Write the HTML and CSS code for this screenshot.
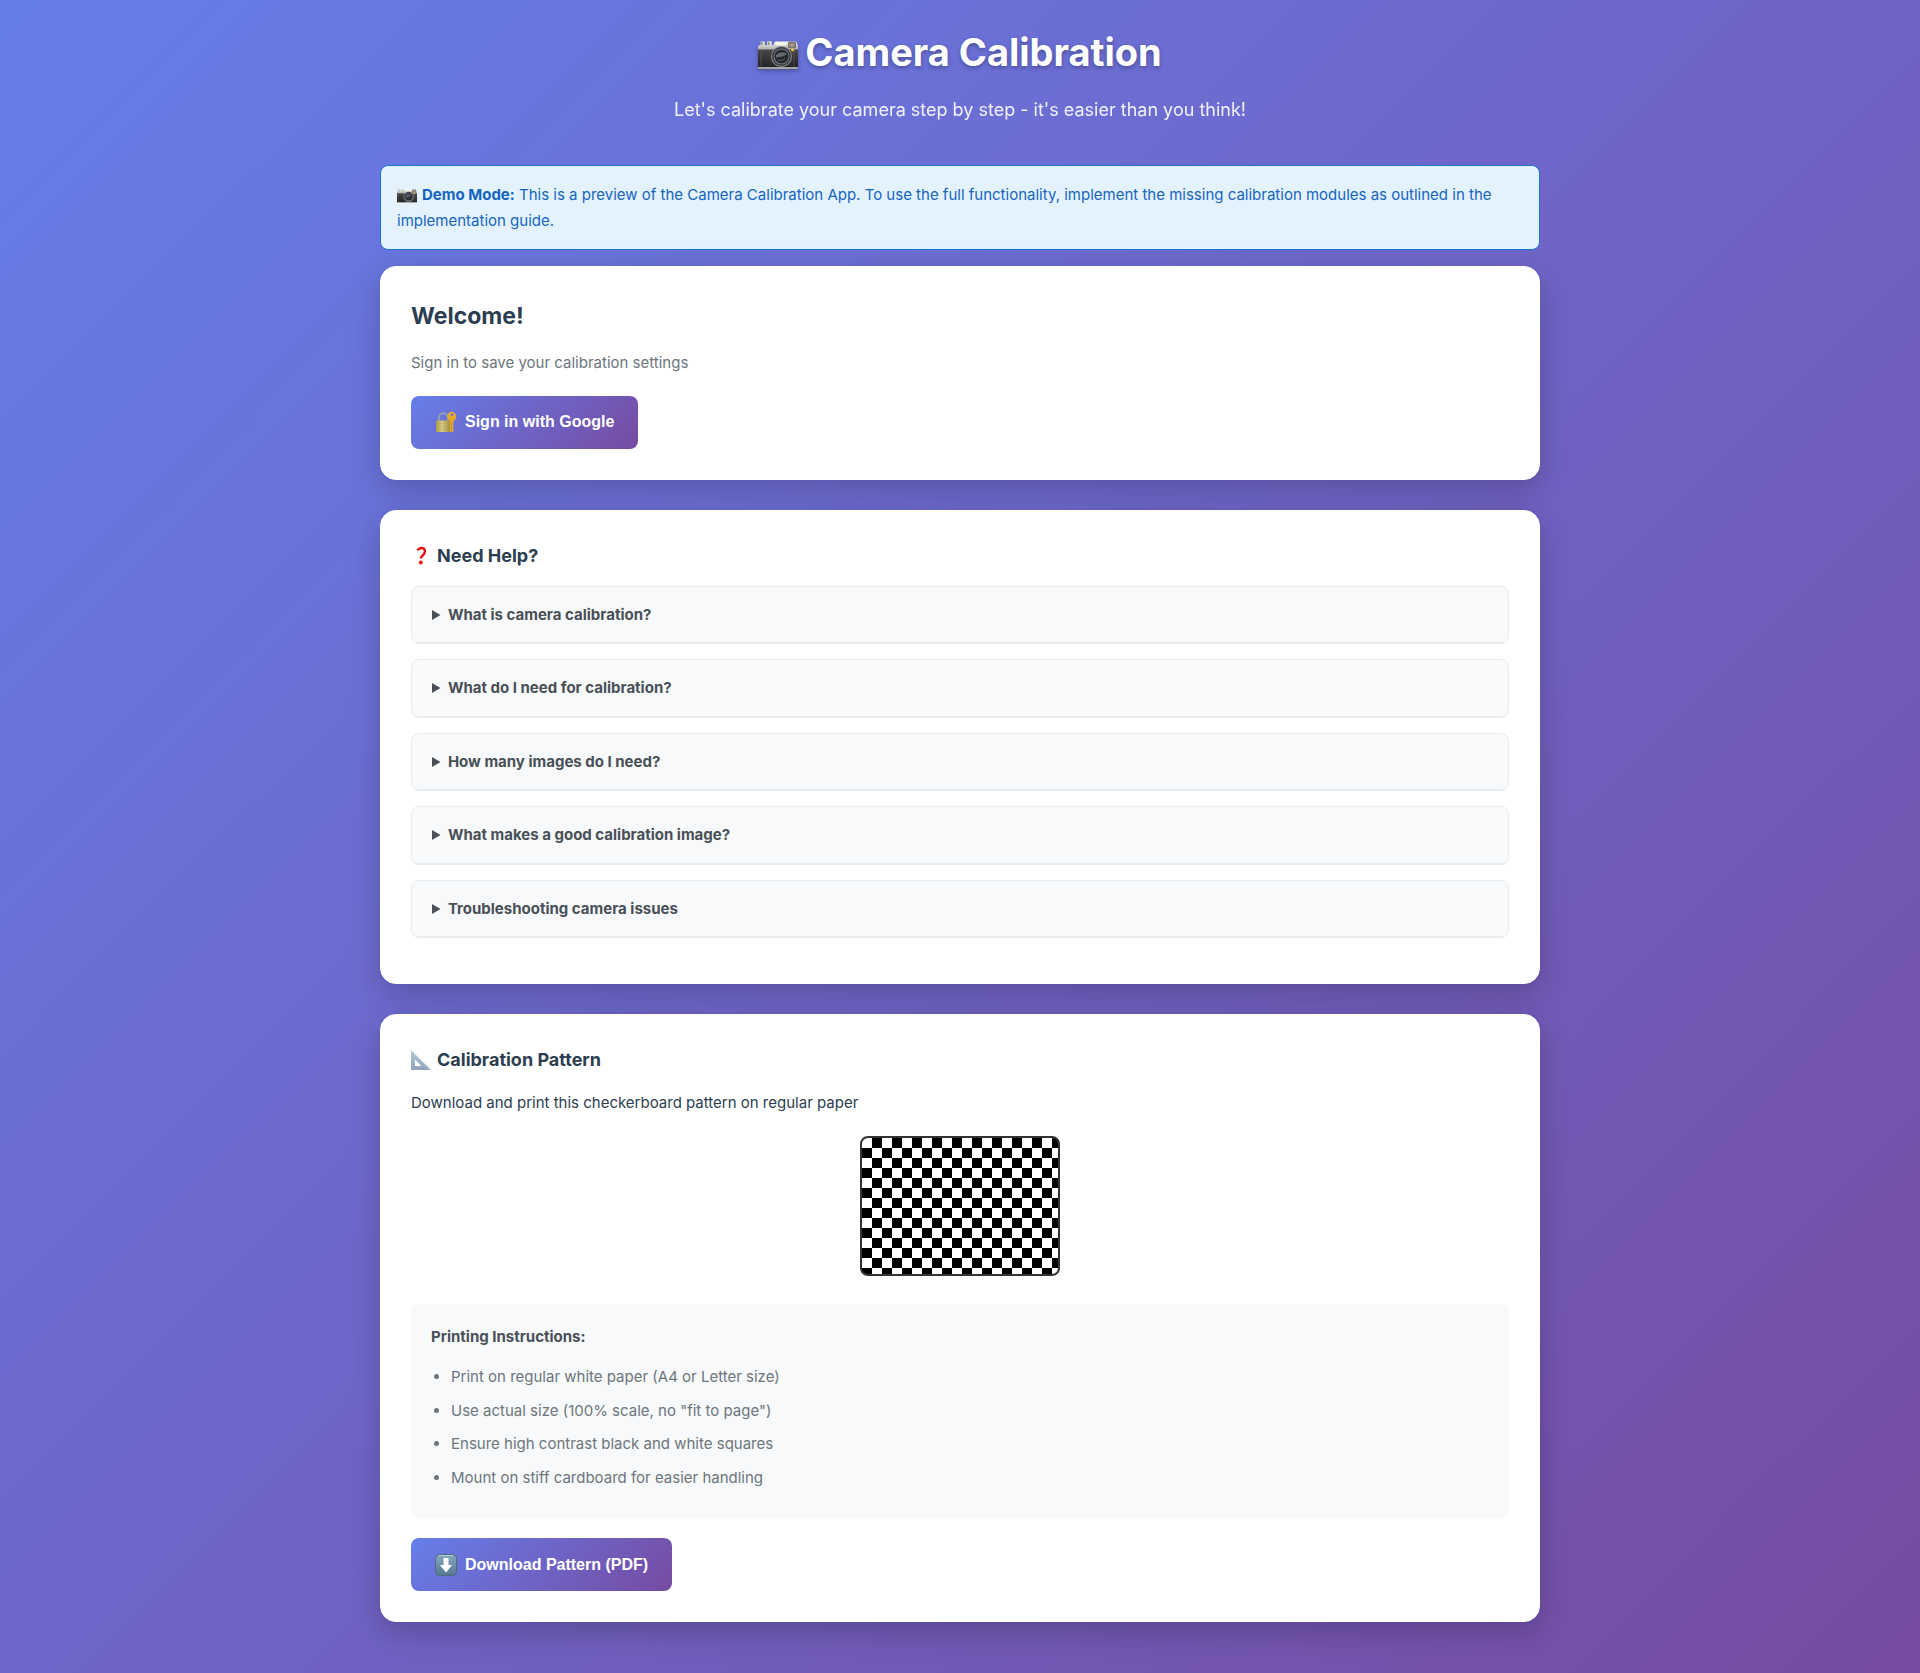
FILE: index.html
```html
<!DOCTYPE html>
<html lang="en">
<head>
<meta charset="utf-8">
<meta name="viewport" content="width=device-width, initial-scale=1">
<title>Camera Calibration</title>
<link rel="stylesheet" href="styles.css">
</head>
<body>
<svg width="0" height="0" class="defs" aria-hidden="true">
  <defs>
    <linearGradient id="silver" x1="0" y1="0" x2="0" y2="1"><stop offset="0" stop-color="#f1f1ef"/><stop offset="1" stop-color="#a9a9a8"/></linearGradient>
    <linearGradient id="leather" x1="0" y1="0" x2="0" y2="1"><stop offset="0" stop-color="#484848"/><stop offset="1" stop-color="#222"/></linearGradient>
    <linearGradient id="brass" x1="0" y1="0" x2="1" y2="0"><stop offset="0" stop-color="#a99a4c"/><stop offset=".4" stop-color="#d8cd86"/><stop offset="1" stop-color="#9c8b3c"/></linearGradient>
    <linearGradient id="steel" x1="0" y1="0" x2="0" y2="1"><stop offset="0" stop-color="#87aac0"/><stop offset="1" stop-color="#557890"/></linearGradient>
    <linearGradient id="ruler" x1="0" y1="0" x2="0" y2="1"><stop offset="0" stop-color="#b9c9d8"/><stop offset="1" stop-color="#8fa3ba"/></linearGradient>
    <symbol id="camera" viewBox="0 0 40 28">
      <path d="M2.500 4.500V1.200Q2.500.3 3.500.3H6q1 0 1 .9v3.300zM9 4.500V1.200q0-.9 1-.9h3q1 0 1 .9v3.300z" fill="#d5d5d3"/>
      <path d="M3.800 1v3.500M10.800 1v3.500" stroke="#777"/>
      <path d="M0 9V5.500Q0 4 2 4H15l2-3.500h20q2 0 2 2L40 5v4z" fill="url(#silver)"/>
      <rect y="8.500" width="40" height="18" fill="url(#leather)"/>
      <path d="M3 9v17M36 9v17" stroke="#666" stroke-width=".6"/>
      <path d="M0 26h40v1q0 1-1 1H1q-1 0-1-1z" fill="#a5a5a4"/>
      <rect x="17.500" y="1" width="11" height="3.300" rx=".6" fill="#f9f5e8"/>
      <rect x="30.500" y="1.300" width="7" height="5.500" rx=".8" fill="#8c8278" stroke="#57514b" stroke-width=".7"/>
      <path d="M31 4h6M34 2v4.500" stroke="#c4b9aa" stroke-width=".6"/>
      <circle cx="23.500" cy="15.500" r="10.500" fill="#8a8c90"/>
      <circle cx="23.500" cy="15.500" r="9.500" fill="#33363a"/>
      <circle cx="23.500" cy="15.500" r="8" fill="#777b80"/>
      <circle cx="23.500" cy="15.500" r="7" fill="#26292d"/>
      <path d="M18 14q5-5 11-1-3 2.500-11 3.500z" fill="#646b73"/>
      <path d="M20 19q5 1.500 7-2" fill="none" stroke="#53606c"/>
      <circle cx="34.500" cy="9" r="1.300" fill="#ffd531"/>
    </symbol>
  </defs>
</svg>

<div class="container">
  <header class="header">
    <h1><svg class="icon-title" viewBox="0 0 40 28" aria-hidden="true"><use href="#camera"/></svg>Camera Calibration</h1>
    <p>Let's calibrate your camera step by step - it's easier than you think!</p>
  </header>

  <main>
    <div class="notice"><svg class="icon-inline" viewBox="0 0 40 28" aria-hidden="true"><use href="#camera"/></svg><strong>Demo Mode:</strong> This is a preview of the Camera Calibration App. To use the full functionality, implement the missing calibration modules as outlined in the implementation guide.</div>

    <section class="card">
      <h2>Welcome!</h2>
      <p class="muted">Sign in to save your calibration settings</p>
      <button class="btn" type="button">
        <svg class="icon-btn" viewBox="0 0 22 22" aria-hidden="true">
          <path d="M4 10V6.500a4.300 4.300 0 0 1 8.600 0V10" fill="none" stroke="#8194a4" stroke-width="1.800"/>
          <path d="M3.900 9V6.500a4.400 4.400 0 0 1 8.800 0" fill="none" stroke="#b9c8d2" stroke-width=".6"/>
          <rect x="1" y="9.500" width="14.500" height="11.500" rx=".8" fill="url(#brass)"/>
          <path d="M1 12.500h14.500M1 15.300h14.500M1 18.200h14.500" stroke="#a89a58" stroke-width=".4"/>
          <path d="M17 .8a4.900 4.900 0 0 0-2 9.300v10l1.600 1.400 2-1.500v-2l-1-1 1-1v-1.500l-1-1 1-1v-2.500a4.900 4.900 0 0 0-1.600-9.200zm0 1.700a1.300 1.300 0 1 1 0 2.600 1.300 1.300 0 0 1 0-2.600z" fill="#e7a92d" fill-rule="evenodd"/>
          <path d="M16.500 10v10" stroke="#b97b12" stroke-width=".6"/>
        </svg>
        Sign in with Google
      </button>
    </section>

    <section class="card">
      <h3>
        <svg class="icon-heading" viewBox="0 0 20 20" aria-hidden="true"><path d="M6.300 4.200Q8.200 2 10.600 2c3.400 0 4.200 3.600 2.400 6-1.400 1.800-3 2.300-3 4.600" fill="none" stroke="#e60d0d" stroke-width="2.400"/><circle cx="9.800" cy="16.400" r="2" fill="#e60d0d"/></svg>
        Need Help?
      </h3>
      <details class="faq"><summary>What is camera calibration?</summary></details>
      <details class="faq"><summary>What do I need for calibration?</summary></details>
      <details class="faq"><summary>How many images do I need?</summary></details>
      <details class="faq"><summary>What makes a good calibration image?</summary></details>
      <details class="faq"><summary>Troubleshooting camera issues</summary></details>
    </section>

    <section class="card">
      <h3>
        <svg class="icon-heading" viewBox="0 0 20 20" aria-hidden="true"><path d="M0 0l20 20H0zM4 9.500V16h6.500z" fill="url(#ruler)" fill-rule="evenodd"/><path d="M.5 1l18.500 18.500" stroke="#d9e4ec" stroke-width="1" stroke-dasharray="1 1"/></svg>
        Calibration Pattern
      </h3>
      <p>Download and print this checkerboard pattern on regular paper</p>
      <div class="checkerboard" role="img" aria-label="Checkerboard pattern"></div>
      <div class="instructions">
        <h4>Printing Instructions:</h4>
        <ul>
          <li>Print on regular white paper (A4 or Letter size)</li>
          <li>Use actual size (100% scale, no "fit to page")</li>
          <li>Ensure high contrast black and white squares</li>
          <li>Mount on stiff cardboard for easier handling</li>
        </ul>
      </div>
      <button class="btn" type="button">
        <svg class="icon-btn" viewBox="0 0 22 22" aria-hidden="true"><rect x=".5" y=".5" width="21" height="21" rx="4" fill="url(#steel)" stroke="#4d6b80"/><path d="M4 1.500h14" stroke="#b4cbd8" stroke-width="1"/><path d="M8.500 4h5v7h3.500l-6 7.500L5 11h3.500z" fill="#fff"/></svg>
        Download Pattern (PDF)
      </button>
    </section>
  </main>
</div>
</body>
</html>
```
FILE: styles.css
```css
* {
  box-sizing: border-box;
  margin: 0;
  padding: 0;
}

body {
  min-height: 100vh;
  background: linear-gradient(135deg, #667eea 0%, #764ba2 100%);
  color: #2c3e50;
  font-family: Inter, "Liberation Sans", sans-serif;
  font-size: 15px;
  line-height: 1.7;
}

.defs {
  position: absolute;
}

.container {
  max-width: 1200px;
  margin: 0 auto;
  padding: 20px;
}

.header {
  margin-bottom: 40px;
  color: #fff;
  text-align: center;
}

.header h1 {
  display: flex;
  align-items: center;
  justify-content: center;
  gap: 7px;
  margin-bottom: 10px;
  font-size: 38px;
  line-height: 64px;
  text-shadow: 0 2px 4px rgba(0, 0, 0, 0.3);
}

.header p {
  font-size: 18px;
  line-height: 31px;
  opacity: 0.9;
}

.icon-title {
  width: 40px;
  height: 28px;
  margin-top: 6px;
  filter: drop-shadow(0 2px 2px rgba(0, 0, 0, 0.3));
}

.notice {
  margin-bottom: 16px;
  padding: 16px;
  border: 1px solid #1976d2;
  border-radius: 8px;
  background: #e3f2fd;
  color: #1565c0;
}

.icon-inline {
  width: 20px;
  height: 14px;
  margin-right: 5px;
  vertical-align: -3px;
}

.card {
  margin-bottom: 30px;
  padding: 30px;
  border: 1px solid #fff;
  border-radius: 16px;
  background: #fff;
  box-shadow: 0 10px 30px rgba(0, 0, 0, 0.2);
}

.card h2 {
  margin-bottom: 15px;
  font-size: 23px;
  line-height: 38px;
}

.card h3 {
  display: flex;
  align-items: center;
  gap: 6px;
  margin-bottom: 15px;
  font-size: 18px;
  line-height: 30px;
}

.icon-heading {
  width: 20px;
  height: 20px;
}

.card p {
  margin-bottom: 20px;
}

.card .muted {
  color: #6c757d;
}

.btn {
  display: flex;
  align-items: center;
  gap: 8px;
  height: 53px;
  padding: 0 24px;
  border: 0;
  border-radius: 8px;
  background: linear-gradient(135deg, #667eea 0%, #764ba2 100%);
  color: #fff;
  font-family: "Liberation Sans", Arial, sans-serif;
  font-size: 16px;
  font-weight: 600;
  cursor: pointer;
}

.icon-btn {
  width: 22px;
  height: 22px;
}

.faq {
  margin-bottom: 15px;
  overflow: hidden;
  border: 1px solid #e9ecef;
  border-radius: 8px;
  background: #f8f9fa;
}

.faq summary {
  padding: 15px 20px;
  border-bottom: 1px solid #e9ecef;
  color: #495057;
  font-weight: 700;
  cursor: pointer;
}

.checkerboard {
  width: 200px;
  height: 140px;
  margin: 0 auto 28px;
  border: 2px solid #333;
  border-radius: 8px;
  background: conic-gradient(#000 25%, #fff 0 50%, #000 0 75%, #fff 0) 0 0 / 20px 20px;
}

.instructions {
  margin-bottom: 20px;
  padding: 20px;
  border-radius: 8px;
  background: #f8f9fa;
  color: #6c757d;
}

.instructions h4 {
  margin-bottom: 15px;
  color: #495057;
  font-size: 15px;
}

.instructions ul {
  padding-left: 20px;
}

.instructions li {
  margin-bottom: 8px;
}
```
